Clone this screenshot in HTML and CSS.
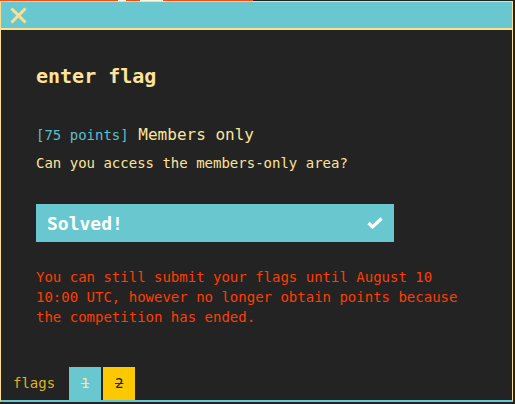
FILE: index.html
```html
<!DOCTYPE html>
<html>
<head>
<meta charset="utf-8">
<link rel="stylesheet" href="styles.css">
</head>
<body>
<div class="modal">
  <div class="modal-header">
    <svg class="close" width="17" height="17" viewBox="0 0 17 17"><path d="M1.5 1.5 L15.5 15.5 M15.5 1.5 L1.5 15.5" stroke="#fde08f" stroke-width="3" fill="none"/></svg>
  </div>
  <div class="modal-body">
    <div class="content">
      <h1 class="title">enter flag</h1>
      <div class="chal"><span class="pts">[75 points]</span> Members only</div>
      <p class="desc">Can you access the members-only area?</p>
      <div class="solved">
        <span>Solved!</span>
        <svg width="16" height="12" viewBox="0 0 16 12"><path d="M1.5 6 L5.5 10 L14.5 1.5" stroke="#fff" stroke-width="3.2" fill="none"/></svg>
      </div>
      <p class="notice">You can still submit your flags until August 10 10:00 UTC, however no longer obtain points because the competition has ended.</p>
    </div>
    <div class="tabs">
      <div class="tab-label">flags</div>
      <div class="tab tab-cyan">1</div>
      <div class="tab tab-yellow">2</div>
    </div>
  </div>
</div>
</body>
</html>
```

FILE: styles.css
```css
html {
  background:
    linear-gradient(to right, #ff4a0a 0 118px, #fff3d8 118px 126px, #ff4a0a 126px 140px, #fff3d8 140px 163px, #ff4a0a 163px 253px, transparent 253px) top left / 100% 1px no-repeat,
    #232323;
  height: 100%;
}
body {
  margin: 0;
  font-family: "DejaVu Sans Mono", "Liberation Mono", monospace;
}
.modal {
  box-sizing: border-box;
  margin-top: 1px;
  width: 513px;
  height: 401px;
  border: 1px solid #fde08f;
  border-bottom: 2px solid #69c7cf;
  display: flex;
  flex-direction: column;
  background: #232323;
}
.modal-header {
  height: 25px;
  background: #69c7cf;
  border-bottom: 2px solid #fde08f;
  display: flex;
  align-items: center;
  padding-left: 9px;
  padding-top: 1px;
  box-sizing: content-box;
}
.close { display: block; }
.modal-body {
  flex: 1;
  display: flex;
  flex-direction: column;
  justify-content: space-between;
}
.content {
  padding: 34px 36px 0 35px;
}
.title {
  margin: 0;
  font-size: 20px;
  line-height: 24px;
  font-weight: bold;
  color: #fde39b;
}
.chal {
  margin-top: 37px;
  font-size: 16px;
  line-height: 20px;
  color: #fde39b;
}
.pts {
  font-size: 14px;
  color: #5ebfca;
}
.desc {
  margin: 8px 0 0;
  font-size: 14px;
  line-height: 20px;
  color: #fde39b;
}
.solved {
  margin-top: 31px;
  width: 358px;
  height: 38px;
  box-sizing: border-box;
  background: #69c7cf;
  display: flex;
  align-items: center;
  justify-content: space-between;
  padding: 0 11px 0 11px;
  color: #fff;
  font-weight: bold;
  font-size: 18px;
}
.solved svg { display: block; }
.notice {
  margin: 25px 0 0;
  font-size: 14px;
  line-height: 20px;
  color: #ff3d00;
}
.tabs {
  display: flex;
  height: 33px;
  align-items: stretch;
}
.tab-label {
  padding: 0 13px 0 12px;
  font-size: 14px;
  line-height: 33px;
  color: #dcb424;
}
.tab {
  width: 32px;
  margin-left: 1px;
  font-size: 14px;
  line-height: 33px;
  text-align: center;
  text-decoration: line-through;
}
.tab-cyan {
  background: #69c7cf;
  color: #fde39b;
}
.tab-yellow {
  margin-left: 2px;
  background: #fcc800;
  color: #232323;
}
```
